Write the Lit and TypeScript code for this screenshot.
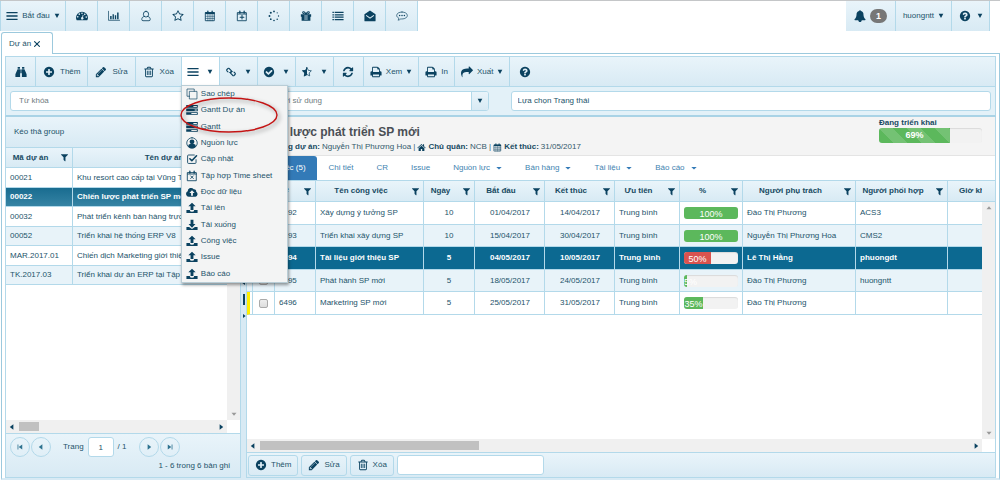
import { LitElement, html, css, svg, nothing } from "lit";
import { customElement, state } from "lit/decorators.js";
import { classMap } from "lit/directives/class-map.js";
import { styleMap } from "lit/directives/style-map.js";

const DISC = "m320-64q0 209-103 385.5t-279.5 279.5-385.5 103-385.5-103-279.5-279.5-103-385.5 103-385.5 279.5-279.5 385.5-103 385.5 103 279.5 279.5 103 385.5z";

const solid = (d: string) => svg`<path fill-rule="evenodd" d=${d} />`;
const line = (d: string, w = 130) =>
  svg`<path fill="none" stroke="currentColor" stroke-width=${w} stroke-linecap="round" stroke-linejoin="round" d=${d} />`;

const trayUp = solid(
  "M64 1180h520v80a312 190 0 0 0 624 0v-80h520v452H64zM896 100L1440 640H1110v560H682V640H352z",
);
const trayDown = solid(
  "M64 1180h400l432 330 432-330h400v452H64zM896 1300L380 740H682V130h428v610h302z",
);
const calendarFrame = svg`${line("M256 384h1280v1216H256z", 128)}${line("M576 160v320M1216 160v320", 190)}`;

const ICONS: Record<string, unknown> = {
  bars: solid("M64 300h1664v200H64zM64 800h1664v200H64zM64 1300h1664v200H64z"),
  dash: svg`<path fill-rule="evenodd" d="M896 256a896 896 0 0 0-896 896q0 200 110 384h1572q110-184 110-384A896 896 0 0 0 896 256zM384 1024a120 120 0 1 1-240 0 120 120 0 0 1 240 0zM610 620a120 120 0 1 1-240 0 120 120 0 0 1 240 0zM1016 480a120 120 0 1 1-240 0 120 120 0 0 1 240 0zM1430 650a120 120 0 1 1-240 0 120 120 0 0 1 240 0zM1650 1060a120 120 0 1 1-240 0 120 120 0 0 1 240 0zM1000 700l-70 340a190 190 0 1 0 110 30l80-340z"/>`,
  chart: svg`${line("M64 192v1344h1664", 110)}<path d="M320 896h220v480H320zM680 640h200v736H680zM1020 800h200v576h-200zM1360 384h220v992h-220z"/>`,
  user: line("M896 192a370 400 0 0 1 0 860a370 400 0 0 1 0-860zM640 960c-300 40-370 260-370 460q0 180 180 180h892q180 0 180-180c0-200-70-420-370-460", 125),
  man: solid("M896 150a400 430 0 1 1 0 860 400 430 0 1 1 0-860zM560 980q336 220 672 0 360 60 360 460 0 200-200 200H400q-200 0-200-200 0-400 360-460z"),
  star: solid("M1201 1004l306-297-422-62-189-382-189 382-422 62 306 297-73 421 378-199 377 199zm527-357q0 22-26 48l-363 354 86 500q1 7 1 20 0 50-41 50-19 0-40-12l-449-236-449 236q-22 12-40 12-21 0-31.5-14.5t-10.5-35.5q0-6 2-20l86-500-364-354q-25-27-25-48 0-37 56-46l502-73 225-455q19-41 49-41t49 41l225 455 502 73q56 9 56 46z"),
  halfstar: svg`${line("M896 230l200 420 450 66-325 316 77 446-402-212-402 212 77-446L246 716l450-66z", 110)}<path d="M896 130v1200l-480 250 92-530L120 680l538-78z"/>`,
  calendar: svg`${calendarFrame}<path d="M192 320h1408v300H192z"/>${line("M256 940h1280M256 1260h1280M576 640v960M896 640v960M1216 640v960", 80)}`,
  calplus: svg`${calendarFrame}${line("M256 600h1280", 128)}${line("M896 800v560M616 1080h560", 150)}`,
  calx: svg`${calendarFrame}${line("M256 600h1280", 128)}${line("M700 880l392 392M1092 880l-392 392", 130)}`,
  spinner: svg`${[
    [896, 220, 130], [1374, 418, 90], [1572, 896, 100], [1374, 1374, 110],
    [896, 1572, 120], [418, 1374, 130], [220, 896, 140], [418, 418, 150],
  ].map(([x, y, r]) => svg`<circle cx=${x} cy=${y} r=${r} />`)}`,
  gift: svg`<path fill-rule="evenodd" d="M128 640h1536v352H128zM240 992h1312v608H240zM700 760v740h110V760zM982 760v740h110V760z"/>${line("M896 620C700 160 380 180 400 420q20 180 496 200C1092 160 1412 180 1392 420q-20 180-496 200z", 150)}`,
  list: solid("M64 256h220v190H64zM400 256h1328v190H400zM64 620h220v190H64zM400 620h1328v190H400zM64 984h220v190H64zM400 984h1328v190H400zM64 1348h220v190H64zM400 1348h1328v190H400z"),
  mail: solid("M896 64L1728 640v960q0 90-90 90H154q-90 0-90-90V640zM896 1290L1520 850 1430 740 896 1110 362 740 272 850z"),
  comment: svg`${line("M896 300c470 0 800 230 800 520s-330 520-800 520q-90 0-180-14-200 180-420 190 130-130 130-300C220 1110 96 980 96 820 96 530 426 300 896 300z", 100)}<circle cx="540" cy="820" r="110"/><circle cx="896" cy="820" r="110"/><circle cx="1252" cy="820" r="110"/>`,
  bell: solid("M1728 1408q0 52-38 90t-90 38h-448q0 106-75 181t-181 75-181-75-75-181h-448q-52 0-90-38t-38-90q50-42 91-88t85-119.5 74.5-158.5 50-206 19.5-260q0-152 117-282.5t307-158.5q-8-19-8-39 0-40 28-68t68-28 68 28 28 68q0 20-8 39 190 28 307 158.5t117 282.5q0 139 19.5 260t50 206 74.5 158.5 85 119.5 91 88z"),
  help: solid("M1024 1376v-192q0-14-9-23t-23-9h-192q-14 0-23 9t-9 23v192q0 14 9 23t23 9h192q14 0 23-9t9-23zm256-672q0-88-55.5-163t-138.5-116-170-41q-243 0-371 213-15 24 8 42l132 100q7 6 19 6 16 0 25-12 53-68 86-92 34-24 86-24 48 0 85.5 26t37.5 59q0 38-20 61t-68 45q-63 28-115.5 86.5t-52.5 125.5v36q0 14 9 23t23 9h192q14 0 23-9t9-23q0-19 21.5-49.5t54.5-49.5q32-18 49-28.5t46-35 44.5-48 28-60.5 12.5-81zm384 192q0 209-103 385.5t-279.5 279.5-385.5 103-385.5-103-279.5-279.5-103-385.5 103-385.5 279.5-279.5 385.5-103 385.5 103 279.5 279.5 103 385.5z"),
  binoculars: solid("M400 160h340v260H400zM1052 160h340v260h-340zM380 480h380v1180H60v-440zM1032 480h380l320 740v440h-700zM800 520h192v560H800z"),
  plus: solid("M1344 960v-128q0-26-19-45t-45-19h-256v-256q0-26-19-45t-45-19h-128q-26 0-45 19t-19 45v256h-256q-26 0-45 19t-19 45v128q0 26 19 45t45 19h256v256q0 26 19 45t45 19h128q26 0 45-19t19-45v-256h256q26 0 45-19t19-45z" + DISC),
  pencil: solid("M491 1536l91-91-235-235-91 91v107h128v128h107zm523-928q0-22-22-22-10 0-17 7l-542 542q-7 7-7 17 0 22 22 22 10 0 17-7l542-542q7-7 7-17zm-54-192l416 416-832 832h-416v-416zm683 96q0 53-37 90l-166 166-416-416 166-165q36-38 90-38 53 0 91 38l235 234q37 39 37 91z"),
  trash: solid("M704 736v576q0 14-9 23t-23 9h-64q-14 0-23-9t-9-23v-576q0-14 9-23t23-9h64q14 0 23 9t9 23zm256 0v576q0 14-9 23t-23 9h-64q-14 0-23-9t-9-23v-576q0-14 9-23t23-9h64q14 0 23 9t9 23zm256 0v576q0 14-9 23t-23 9h-64q-14 0-23-9t-9-23v-576q0-14 9-23t23-9h64q14 0 23 9t9 23zm128 724v-948h-896v948q0 22 7 40.5t14.5 27 10.5 8.5h832q3 0 10.5-8.5t14.5-27 7-40.5zm-672-1076h448l-48-117q-7-9-17-11h-317q-10 2-17 11zm928 32v64q0 14-9 23t-23 9h-96v948q0 83-47 143.5t-113 60.5h-832q-66 0-113-58.5t-47-141.5v-952h-96q-14 0-23-9t-9-23v-64q0-14 9-23t23-9h309l70-167q15-37 54-63t79-26h320q40 0 79 26t54 63l70 167h309q14 0 23 9t9 23z"),
  link: svg`${line("M700 980q120 40 210-50l20-20q100-100 0-210L640 380Q530 290 430 380L290 520Q200 620 290 730l150 150", 170)}${line("M1092 812q-120-40-210 50l-20 20q-100 100 0 210l290 320q110 90 210 0l140-140q90-100 0-210l-150-150", 170)}`,
  check: solid("M1412 734q0-28-18-46l-91-90q-19-19-45-19t-45 19l-408 407-226-226q-19-19-45-19t-45 19l-91 90q-18 18-18 46 0 27 18 45l362 362q19 19 45 19 27 0 46-19l543-543q18-18 18-45zm252 162q0 209-103 385.5t-279.5 279.5-385.5 103-385.5-103-279.5-279.5-103-385.5 103-385.5 279.5-279.5 385.5-103 385.5 103 279.5 279.5 103 385.5z"),
  refresh: solid("M1639 1056q0 5-1 7-64 268-268 434.5t-478 166.5q-146 0-282.5-55t-243.5-157l-129 129q-19 19-45 19t-45-19-19-45v-448q0-26 19-45t45-19h448q26 0 45 19t19 45-19 45l-137 137q71 66 161 102t187 36q134 0 250-65t186-179q11-17 53-117 8-23 30-23h192q13 0 22.5 9.5t9.5 22.5zm25-800v448q0 26-19 45t-45 19h-448q-26 0-45-19t-19-45 19-45l138-138q-148-137-349-137-134 0-250 65t-186 179q-11 17-53 117-8 23-30 23h-199q-13 0-22.5-9.5t-9.5-22.5v-7q65-268 270-434.5t480-166.5q146 0 284 55.5t245 156.5l130-129q19-19 45-19t45 19 19 45z"),
  print: solid("M448 1536h896v-256h-896v256zm0-640h896v-384h-160q-40 0-68-28t-28-68v-160h-640v640zm1280 64v416q0 13-9.500 22.500t-22.500 9.500h-224v160q0 40-28 68t-68 28h-960q-40 0-68-28t-28-68v-160h-224q-13 0-22.500-9.500t-9.500-22.500v-416q0-79 56.500-135.500t135.500-56.500h64v-544q0-40 28-68t68-28h672q40 0 88 20t76 48l152 152q28 28 48 76t20 88v256h64q79 0 135.500 56.500t56.500 135.500z"),
  share: solid("M1792 640q0 26-19 45l-512 512q-19 19-45 19t-45-19-19-45v-256h-224q-98 0-175.5 6t-154 21.5-133 42.5-105.5 69.5-80 101-48.5 138.5-17.5 181q0 55 5 123 0 6 2.5 23.5t2.5 26.5q0 15-8.5 25t-23.500 10q-16 0-28-17-7-9-13-22t-13.500-30-10.500-24q-127-285-127-451 0-199 53-333 162-403 875-403h224v-256q0-26 19-45t45-19 45 19l512 512q19 19 19 45z"),
  filter: solid("M1595 295q17 41-14 70l-493 493v742q0 42-39 59-13 5-25 5-27 0-45-19l-256-256q-19-19-19-45v-486l-493-493q-31-29-14-70 17-39 59-39h1280q42 0 59 39z"),
  copy: svg`${line("M560 500h1080v1140H560z", 100)}${line("M540 1230H150V150h1080v330", 100)}`,
  tasks: solid("M32 160h1728v400H32zM32 690h1728v400H32zM32 1220h1728v400H32zM1100 290v140h520V290zM1300 820v140h320V820zM800 1350v140h820v-140z"),
  person: svg`${line("M896 110a786 786 0 1 1 0 1572 786 786 0 1 1 0-1572z", 120)}<circle cx="896" cy="720" r="360"/><path d="M300 1400q60-350 330-350h532q270 0 330 350-260 280-596 280T300 1400z"/>`,
  tick: svg`${line("M1500 1000v420q0 140-140 140H380q-140 0-140-140V440q0-140 140-140h860", 130)}${line("M580 860l290 290 700-740", 240)}`,
  cloud: solid("M1520 840a420 420 0 0 1-100 760H420A420 420 0 0 1 250 800 500 500 0 0 1 1150 490 300 300 0 0 1 1520 840zM896 640L500 1060h260v380h272v-380h260z"),
  up: trayUp,
  down: trayDown,
  home: solid("M896 200L64 960l100 110 732-650 732 650 100-110-320-290V256h-210v250zM320 1040v540h440v-400h272v400h440v-540L896 540z"),
  caret: solid("M200 260h1392L896 1500z"),
  drop: solid("M100 560h1592L896 1360z"),
  left: solid("M1200 300v1192L400 896z"),
  right: solid("M592 300v1192L1392 896z"),
  arrowup: solid("M896 500l560 700H336z"),
  first: solid("M350 350h180v1092H350zM1400 350v1092L600 896z"),
  last: solid("M1262 350h180v1092h-180zM392 350v1092L1192 896z"),
  close: line("M350 350l1092 1092M1442 350L350 1442", 250),
};

const icon = (name: string, size = "m") =>
  html`<svg class="icon ${size}" viewBox="0 0 1792 1792" aria-hidden="true">${ICONS[name]}</svg>`;

const SHORTCUTS: [string, string][] = [
  ["dash", "Tổng quan"], ["chart", "Thống kê"], ["user", "Người dùng"], ["star", "Yêu thích"],
  ["calendar", "Lịch"], ["calplus", "Thêm lịch"], ["spinner", "Tiến trình"], ["gift", "Quà tặng"],
  ["list", "Danh sách"], ["mail", "Thư"], ["comment", "Trao đổi"],
];

const MENU: [string, string][] = [
  ["copy", "Sao chép"], ["tasks", "Gantt Dự án"], ["tasks", "Gantt"], ["person", "Nguồn lực"],
  ["tick", "Cập nhật"], ["calx", "Tập hợp Time sheet"], ["cloud", "Đọc dữ liệu"], ["up", "Tải lên"],
  ["down", "Tải xuống"], ["up", "Công việc"], ["up", "Issue"], ["up", "Báo cáo"],
];

const PROJECTS = [
  ["00021", "Khu resort cao cấp tại Vũng Tàu"],
  ["00022", "Chiến lược phát triển SP mới"],
  ["00032", "Phát triển kênh bán hàng trực tuyến"],
  ["00052", "Triển khai hệ thống ERP V8"],
  ["MAR.2017.01", "Chiến dịch Marketing giới thiệu SP"],
  ["TK.2017.03", "Triển khai dự án ERP tại Tập đoàn"],
];

interface Task {
  id: string; name: string; days: number; start: string; end: string;
  done: number; owner: string; partner: string; late?: boolean; flag?: boolean;
}

const TASKS: Task[] = [
  { id: "6492", name: "Xây dựng ý tưởng SP", days: 10, start: "01/04/2017", end: "14/04/2017", done: 100, owner: "Đào Thị Phương", partner: "ACS3" },
  { id: "6493", name: "Triển khai xây dựng SP", days: 10, start: "15/04/2017", end: "30/04/2017", done: 100, owner: "Nguyễn Thị Phương Hoa", partner: "CMS2" },
  { id: "6494", name: "Tài liệu giới thiệu SP", days: 5, start: "04/05/2017", end: "10/05/2017", done: 50, owner: "Lê Thị Hằng", partner: "phuongdt", late: true },
  { id: "6495", name: "Phát hành SP mới", days: 5, start: "18/05/2017", end: "24/05/2017", done: 5, owner: "Đào Thị Phương", partner: "huongntt" },
  { id: "6496", name: "Marketring SP mới", days: 5, start: "25/05/2017", end: "31/05/2017", done: 35, owner: "Đào Thị Phương", partner: "", flag: true },
];

const HEADS = ["#", "Tên công việc", "Ngày", "Bắt đầu", "Kết thúc", "Ưu tiên", "%", "Người phụ trách", "Người phối hợp", "Giờ khả dụng"];

const TABS: [string, boolean][] = [
  ["Công việc (5)", false], ["Chi tiết", false], ["CR", false], ["Issue", false],
  ["Nguồn lực", true], ["Bán hàng", true], ["Tài liệu", true], ["Báo cáo", true],
];

@customElement("app-root")
export class AppRoot extends LitElement {
  @state() private project = "00022";
  @state() private task = "6494";
  @state() private menuOpen = true;

  static styles = css`
    :host {
      display: flex; flex-direction: column; height: 100vh; overflow: hidden;
      border-top: 1px solid #c4c6c8; background: #fff; color: #23536a;
      font: 8px/12px "Liberation Sans", Arial, sans-serif;
      --edge: #b3d9ea; --ink: #0b4260; --fill: linear-gradient(#e9f4fa, #d8eaf4);
    }
    :host, * { box-sizing: border-box; }
    button, input { font: inherit; color: inherit; margin: 0; }
    button { background: none; border: 0; padding: 0; display: flex; align-items: center; justify-content: center; white-space: nowrap; }
    a { color: inherit; text-decoration: none; }
    .icon { width: 12px; height: 12px; fill: currentColor; color: var(--ink); flex: none; display: block; }
    .icon.s { width: 8px; height: 8px; }
    .icon.c { width: 6px; height: 6px; }
    .icon.f { width: 9px; height: 9px; }

    .top { display: flex; justify-content: space-between; height: 30px; padding-right: 10px; flex: none; }
    .bar { display: flex; background: var(--fill); }
    .bar button { width: 32px; border-right: 1px solid var(--edge); gap: 4px; }
    .bar .start { width: 66px; border-left: 1px solid var(--edge); }
    .bar .alerts { width: 50px; }
    .bar .account { width: 56px; }
    .bar .about { width: 38px; gap: 6px; }
    .badge { background: #777; color: #fff; font-size: 9px; font-weight: bold; border-radius: 7px; padding: 1px 6px; }

    .doctabs { display: flex; height: 22px; padding: 1px 0 0 1px; flex: none; }
    .doctab { display: flex; align-items: center; gap: 2px; width: 52px; margin-bottom: -1px; padding-left: 7px; background: #fff; border: 1px solid #9cc9dd; border-bottom: 0; border-radius: 3px 3px 0 0; position: relative; }

    .page { flex: 1; min-height: 0; display: flex; flex-direction: column; margin: 0 0 2px 1px; padding: 2px 3px 0; border: 1px solid #9cc9dd; border-bottom: 2px solid #d8eaf4; }
    .tools { display: flex; height: 31px; flex: none; background: var(--fill); border: 1px solid var(--edge); position: relative; }
    .tools button { padding: 0 7px; gap: 5px; border-right: 1px solid var(--edge); }
    .tools .arrow { width: 38px; gap: 8px; padding: 0; }
    .tools .open { background: #fff; }
    .tools .tight { padding: 0 6px; gap: 4px; }
    .tools .solo { width: 31px; padding: 0; border-right-color: transparent; }
    .tools .lead { width: 30px; padding: 0; }
    .holder { display: flex; position: relative; }

    .menu { position: absolute; z-index: 5; top: 28px; left: -1px; width: 107px; height: 198px; margin: 0; padding: 0; list-style: none; display: flex; flex-direction: column; justify-content: space-around; background: #f3f4f4; border: 1px solid #b9cdd6; box-shadow: 1px 2px 3px rgba(0, 0, 0, 0.4); }
    .menu button { width: 100%; height: 16px; padding: 0 0 0 4px; gap: 3px; justify-content: flex-start; border: 0; }
    .ring { position: absolute; z-index: 6; top: 40px; left: -4px; width: 104px; height: 42px; pointer-events: none; filter: drop-shadow(2px 2px 2px rgba(0, 0, 0, 0.4)); }

    .search { display: grid; grid-template-columns: 228fr 231fr 483fr; gap: 22px; align-items: center; height: 30px; flex: none; padding: 0 4px; background: #e3f1f8; border: 1px solid var(--edge); border-top: 0; border-bottom: 2px solid #a9d3e6; }
    .box { display: flex; height: 20px; min-width: 0; background: #fff; border: 1px solid var(--edge); border-radius: 3px; overflow: hidden; }
    .box input { flex: 1; min-width: 0; border: 0; outline: 0; padding: 0 8px; background: transparent; }
    .box input::placeholder { color: #6f7b80; opacity: 1; }
    .box.dark input { padding: 0 6px; }
    .box.dark input::placeholder { color: #23536a; }
    .box button { width: 17px; border-left: 1px solid var(--edge); background: var(--fill); }

    .main { flex: 1; min-height: 0; display: grid; grid-template-columns: 236px 6px minmax(0, 1fr); }
    .side, .detail { display: flex; flex-direction: column; min-width: 0; min-height: 0; border: 1px solid var(--edge); border-top: 0; }
    .detail { border-left: 0; }
    .group { height: 30px; padding: 9px 8px; flex: none; background: var(--fill); }
    .split { display: flex; flex-direction: column; align-items: center; justify-content: center; gap: 8px; padding-top: 3px; background: #d8eaf4; border-right: 1px solid var(--edge); }
    .split i { width: 2px; height: 11px; background: var(--ink); }

    .grid { flex: 1; min-height: 0; display: grid; grid-template-columns: minmax(0, 1fr) 13px; grid-template-rows: minmax(0, 1fr) 13px; }
    .view { overflow: hidden; }
    .vbar { display: flex; flex-direction: column; }
    .vbar .cap { height: 21px; flex: none; background: var(--fill); border: solid var(--edge); border-width: 1px 0; }
    .detail .cap { height: 22px; }
    .vtrack { flex: 1; display: flex; flex-direction: column; justify-content: space-between; align-items: center; padding: 2px 0; background: #f0f0f0; }
    .vtrack .icon { color: #999; }
    .flip { transform: rotate(180deg); }
    .htrack { display: flex; align-items: center; padding: 0 2px; background: #f0f0f0; }
    .htrack i { height: 9px; background: #c1c1c1; margin: 0 auto 0 3px; width: 20px; }
    .htrack .long { width: 30%; }

    table { border-collapse: separate; border-spacing: 0; table-layout: fixed; width: 0; }
    th, td { padding: 0 4px; border: solid var(--edge); border-width: 0 1px 1px 0; white-space: nowrap; overflow: hidden; text-align: left; }
    th { background: var(--fill); color: #174a62; border-top-width: 1px; padding: 0 3px; }
    .head { display: flex; align-items: center; justify-content: center; }
    .head span { flex: 1; padding-right: 8px; text-align: center; }
    .c0 { width: 6px; } .c1 { width: 22px; } .c2 { width: 41px; } .c3 { width: 108px; } .c4 { width: 51px; }
    .c5, .c6 { width: 70px; } .c7 { width: 65px; } .c8 { width: 63px; } .c9 { width: 113px; } .c10 { width: 92px; } .c11 { width: 92px; }
    .p0 { width: 67px; } .p1 { width: 200px; }
    .projects th { height: 21px; }
    .projects td { height: 20px; }
    .projects tr:nth-child(even) td { height: 19px; }
    .tasks th { height: 22px; }
    .tasks td { height: 23px; }
    .tasks tr:nth-child(even) td { height: 22px; }
    tbody tr:nth-child(even) { background: #e8f3f9; }
    tbody .on { background: #0c6991 !important; color: #fff; font-weight: bold; }
    .projects .on { background: linear-gradient(#196c90, #3785a5) !important; }
    .mid { text-align: center; }
    .end { text-align: right; padding-right: 14px; }
    .flag { border-left: 3px solid #ffee00; }
    td input { appearance: none; display: block; width: 9px; height: 9px; margin: 0 auto; border: 1px solid #aaa; border-radius: 2px; background: linear-gradient(#eee, #ddd); }
    td.tight { padding: 0; }
    .meter { height: 12px; border-radius: 3px; background: #f2f2f2; overflow: hidden; font-size: 9px; line-height: 14px; box-shadow: inset 0 1px 1px rgba(0, 0, 0, 0.1); }
    .tasks .meter { font-weight: normal; }
    .meter div { height: 100%; background: #5cb85c; color: #fff; text-align: center; white-space: nowrap; }
    .meter .late { background: #d9534f; }

    .pager { height: 44px; flex: none; background: var(--fill); border-top: 1px solid var(--edge); padding: 3px 10px 0 4px; }
    .steps { display: flex; align-items: center; gap: 1px; }
    .steps button { width: 20px; height: 20px; border: 1px solid var(--edge); border-radius: 50%; }
    .steps .icon { color: #2f7390; }
    .steps label { display: flex; align-items: center; gap: 4px; margin: 0 11px; }
    .steps label input { width: 26px; height: 20px; text-align: center; border: 1px solid var(--edge); border-radius: 3px; background: #fff; outline: 0; padding: 0; }
    .count { text-align: right; margin-top: 3px; }

    .info { display: flex; justify-content: space-between; height: 39px; flex: none; padding: 0 13px 0 6px; background: #f4f4f4; border-bottom: 1px solid #e4e4e4; color: #33596b; }
    .about-project { padding-top: 6px; }
    h1 { margin: 0; font-size: 12px; line-height: 18px; color: #4a4f55; white-space: nowrap; }
    .facts { display: flex; align-items: center; gap: 2px; line-height: 12px; white-space: nowrap; }
    .facts b { color: #174a62; }
    .status { width: 103px; line-height: 11px; color: #174a62; font-weight: bold; }
    .status .meter { height: 15px; line-height: 15px; }
    .status .meter div { background: repeating-linear-gradient(45deg, #5cb85c 0 10px, #74c274 10px 20px); }
    .tabs { display: flex; gap: 1px; height: 24px; flex: none; color: #4183b0; }
    .tabs a { display: flex; align-items: center; padding: 0 11px; gap: 6px; }
    .tabs .on { background: #337ab7; color: #fff; border-radius: 3px 3px 0 0; }
    .tabs .icon { color: #337ab7; }
    .foot { display: flex; align-items: center; gap: 3px; height: 25px; flex: none; padding: 0 1px; background: var(--fill); border-top: 1px solid var(--edge); }
    .foot button { height: 21px; padding: 0 6px; gap: 4px; border: 1px solid var(--edge); border-radius: 3px; }
    .foot input { width: 147px; height: 20px; border: 1px solid var(--edge); border-radius: 3px; background: #fff; outline: 0; }
  `;

  private scroll(long: boolean) {
    return html`
      <div class="htrack">
        ${icon("left", "s")}<i class=${classMap({ long })}></i>${icon("right", "s")}
      </div>`;
  }

  private vbar() {
    return html`
      <div class="vbar">
        <div class="cap"></div>
        <div class="vtrack">${icon("arrowup", "s")}<span class="flip">${icon("arrowup", "s")}</span></div>
      </div>`;
  }

  private heading(text: string) {
    return html`<th><div class="head"><span>${text}</span>${icon("filter", "f")}</div></th>`;
  }

  private meter(value: number, late = false) {
    return html`<div class="meter"><div class=${classMap({ late })} style=${styleMap({ width: value + "%" })}>${value}%</div></div>`;
  }

  private toolbar() {
    return html`
      <div class="tools">
        <button class="lead" aria-label="Tìm kiếm">${icon("binoculars")}</button>
        <button>${icon("plus")}Thêm</button>
        <button>${icon("pencil")}Sửa</button>
        <button>${icon("trash")}Xóa</button>
        <div class="holder">
          <button class="arrow ${this.menuOpen ? "open" : ""}" aria-label="Chức năng" @click=${() => (this.menuOpen = !this.menuOpen)}>
            ${icon("bars")}${icon("caret", "c")}
          </button>
          ${this.menuOpen
            ? html`
                <ul class="menu">
                  ${MENU.map(([name, text]) => html`<li><button>${icon(name)}${text}</button></li>`)}
                </ul>
                <svg class="ring" viewBox="0 0 104 42" aria-hidden="true">
                  <ellipse cx="51" cy="18" rx="48" ry="17" fill="none" stroke="#c41414" stroke-width="1.4" />
                </svg>`
            : nothing}
        </div>
        <button class="arrow" aria-label="Liên kết">${icon("link")}${icon("caret", "c")}</button>
        <button class="arrow" aria-label="Duyệt">${icon("check")}${icon("caret", "c")}</button>
        <button class="arrow" aria-label="Đánh giá">${icon("halfstar")}${icon("caret", "c")}</button>
        <button class="lead" aria-label="Làm mới">${icon("refresh")}</button>
        <button class="tight">${icon("print")}Xem${icon("caret", "c")}</button>
        <button class="tight">${icon("print")}In</button>
        <button class="tight">${icon("share")}Xuất${icon("caret", "c")}</button>
        <button class="solo" aria-label="Trợ giúp">${icon("help")}</button>
      </div>`;
  }

  private side() {
    return html`
      <section class="side">
        <div class="group">Kéo thả group</div>
        <div class="grid">
          <div class="view">
            <table class="projects">
              <colgroup><col class="p0" /><col class="p1" /></colgroup>
              <thead><tr>${this.heading("Mã dự án")}${this.heading("Tên dự án")}</tr></thead>
              <tbody>
                ${PROJECTS.map(([code, name]) => html`
                  <tr class=${classMap({ on: code === this.project })} @click=${() => (this.project = code)}>
                    <td>${code}</td><td>${name}</td>
                  </tr>`)}
              </tbody>
            </table>
          </div>
          ${this.vbar()}${this.scroll(false)}
        </div>
        <div class="pager">
          <div class="steps">
            <button aria-label="Trang đầu">${icon("first", "s")}</button>
            <button aria-label="Trang trước">${icon("left", "s")}</button>
            <label>Trang <input value="1" /> / 1</label>
            <button aria-label="Trang sau">${icon("right", "s")}</button>
            <button aria-label="Trang cuối">${icon("last", "s")}</button>
          </div>
          <div class="count">1 - 6 trong 6 bản ghi</div>
        </div>
      </section>`;
  }

  private detail() {
    return html`
      <section class="detail">
        <div class="info">
          <div class="about-project">
            <h1>Chiến lược phát triển SP mới</h1>
            <div class="facts">
              ${icon("man", "f")}<b>Trưởng dự án:</b>Nguyễn Thị Phương Hoa |${icon("home", "f")}<b>Chủ quản:</b>NCB
              |${icon("calendar", "f")}<b>Kết thúc:</b>31/05/2017
            </div>
          </div>
          <div class="status">Đang triển khai${this.meter(69)}</div>
        </div>
        <nav class="tabs">
          ${TABS.map(([text, more], i) => html`<a href="#" class=${i ? "" : "on"}>${text}${more ? icon("drop", "c") : nothing}</a>`)}
        </nav>
        <div class="grid">
          <div class="view">
            <table class="tasks">
              <colgroup>${Array.from({ length: 12 }, (_, i) => html`<col class="c${i}" />`)}</colgroup>
              <thead><tr><th></th><th></th>${HEADS.map((h) => this.heading(h))}</tr></thead>
              <tbody>
                ${TASKS.map((t) => html`
                  <tr class=${classMap({ on: t.id === this.task })} @click=${() => (this.task = t.id)}>
                    <td class="tight ${t.flag ? "flag" : ""}"></td>
                    <td class="tight"><input type="checkbox" aria-label=${t.name} /></td>
                    <td>${t.id}</td><td>${t.name}</td><td class="mid">${t.days}</td>
                    <td class="end">${t.start}</td><td class="end">${t.end}</td><td>Trung bình</td>
                    <td>${this.meter(t.done, t.late)}</td><td>${t.owner}</td><td>${t.partner}</td><td></td>
                  </tr>`)}
              </tbody>
            </table>
          </div>
          ${this.vbar()}${this.scroll(true)}
        </div>
        <div class="foot">
          <button>${icon("plus")}Thêm</button>
          <button>${icon("pencil")}Sửa</button>
          <button>${icon("trash")}Xóa</button>
          <input aria-label="Công việc mới" />
        </div>
      </section>`;
  }

  render() {
    return html`
      <header class="top">
        <div class="bar">
          <button class="start">${icon("bars")}Bắt đầu${icon("caret", "c")}</button>
          ${SHORTCUTS.map(([name, label]) => html`<button aria-label=${label}>${icon(name)}</button>`)}
        </div>
        <div class="bar">
          <button class="alerts" aria-label="Thông báo">${icon("bell")}<span class="badge">1</span></button>
          <button class="account">huongntt${icon("caret", "c")}</button>
          <button class="about" aria-label="Trợ giúp">${icon("help")}${icon("caret", "c")}</button>
        </div>
      </header>
      <div class="doctabs">
        <div class="doctab">Dự án<button aria-label="Đóng">${icon("close", "s")}</button></div>
      </div>
      <main class="page">
        ${this.toolbar()}
        <div class="search">
          <div class="box"><input placeholder="Từ khóa" aria-label="Từ khóa" /></div>
          <div class="box"><input placeholder="Người sử dụng" aria-label="Người sử dụng" /><button aria-label="Chọn">${icon("caret", "c")}</button></div>
          <div class="box dark"><input placeholder="Lựa chọn Trạng thái" aria-label="Trạng thái" /></div>
        </div>
        <div class="main">
          ${this.side()}
          <div class="split">${icon("left", "c")}<i></i>${icon("right", "c")}</div>
          ${this.detail()}
        </div>
      </main>`;
  }
}
